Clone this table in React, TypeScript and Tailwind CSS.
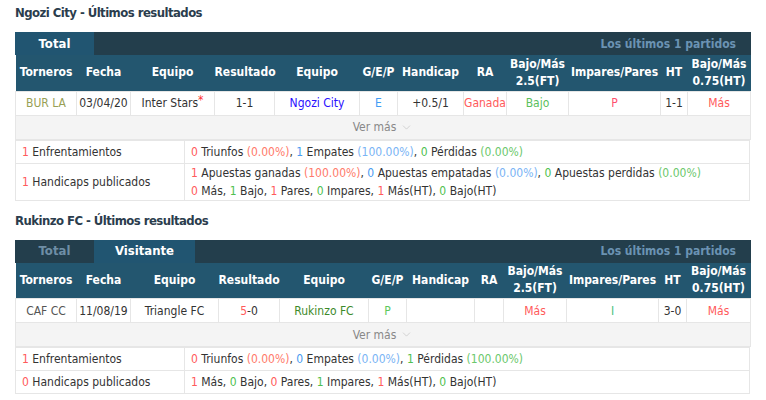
import { ChevronDown } from "lucide-react";

type Cell = { text: React.ReactNode; cls?: string };

const RED = "text-[#ff5b5b]";
const GREEN = "text-[#4fbf4f]";
const BLUE = "text-[#4a9cf0]";

const heads = [
	"Torneros",
	"Fecha",
	"Equipo",
	"Resultado",
	"Equipo",
	"G/E/P",
	"Handicap",
	"RA",
	"Bajo/Más 2.5(FT)",
	"Impares/Pares",
	"HT",
	"Bajo/Más 0.75(HT)",
];

function Section({
	title,
	tabs,
	active,
	widths,
	row,
	stats,
}: {
	title: string;
	tabs: { label: string; w: string }[];
	active: number;
	widths: number[];
	row: Cell[];
	stats: { left: React.ReactNode; right: React.ReactNode }[];
}) {
	return (
		<section className="px-[15px]">
			<h2 className="h-[32px] pt-[3px] text-[13px] font-bold leading-[20px] tracking-[-0.55px] text-[#2b3d4d]">
				{title}
			</h2>
			<div className="flex h-[23px] items-stretch bg-[#233e4c]">
				{tabs.map((t, i) => (
					<div
						key={t.label}
						className={`${t.w} flex items-center justify-center text-[13px] font-bold ${
							i === active ? "bg-[#215571] text-white" : "text-[#6e8ea6]"
						}`}
					>
						{t.label}
					</div>
				))}
				<div className="ml-auto flex items-center pr-[15px] text-[12px] font-bold text-[#6b93b3]">
					Los últimos 1 partidos
				</div>
			</div>
			<table className="w-[735px] table-fixed border-collapse text-center text-[12px]">
				<colgroup>
					{widths.map((w, i) => (
						<col key={i} style={{ width: w }} />
					))}
				</colgroup>
				<thead>
					<tr className="h-[36px] bg-[#23566f] text-white">
						{heads.map((h, i) => (
							<th key={i} className="px-0 font-bold leading-[17px]">
								{h}
							</th>
						))}
					</tr>
				</thead>
				<tbody>
					<tr className="h-[24px] text-[#333]">
						{row.map((c, i) => (
							<td key={i} className={`border border-[#e6e6e6] px-0 whitespace-nowrap ${c.cls ?? ""}`}>
								{c.text}
							</td>
						))}
					</tr>
					<tr className="h-[24px] bg-[#f4f4f4]">
						<td colSpan={12} className="border border-[#e6e6e6] text-[#888]">
							<span className="inline-flex items-center gap-[4px]">
								Ver más
								<ChevronDown size={13} strokeWidth={1} className="text-[#b5b5b5]" />
							</span>
						</td>
					</tr>
				</tbody>
			</table>
			<table className="w-[735px] table-fixed border-collapse text-[12px] text-[#333]">
				<colgroup>
					<col style={{ width: 169 }} />
					<col />
				</colgroup>
				<tbody>
					{stats.map((s, i) => (
						<tr key={i} className="h-[23px]">
							<td className="border border-[#e6e6e6] pl-[6px] leading-[18px]">{s.left}</td>
							<td className="border border-[#e6e6e6] py-0 pl-[6px] leading-[18px]">{s.right}</td>
						</tr>
					))}
				</tbody>
			</table>
		</section>
	);
}

const R = ({ children }: { children: React.ReactNode }) => <span className={RED}>{children}</span>;
const G = ({ children }: { children: React.ReactNode }) => <span className={GREEN}>{children}</span>;
const B = ({ children }: { children: React.ReactNode }) => <span className={BLUE}>{children}</span>;
const Rp = ({ children }: { children: React.ReactNode }) => <span className="text-[#ff7a6a]">{children}</span>;
const Bp = ({ children }: { children: React.ReactNode }) => <span className="text-[#7ab4f5]">{children}</span>;
const Gp = ({ children }: { children: React.ReactNode }) => <span className="text-[#6cc86c]">{children}</span>;

export default function App() {
	return (
		<div className="min-h-[400px] w-[766px] bg-white font-['DejaVu_Sans_Condensed','DejaVu_Sans',sans-serif]">
			<Section
				title="Ngozi City - Últimos resultados"
				tabs={[{ label: "Total", w: "w-[79px]" }]}
				active={0}
				widths={[61, 54, 84, 60, 85, 38, 66, 43, 62, 92, 27, 63]}
				row={[
					{ text: "BUR LA", cls: "text-[#98a055]" },
					{ text: "03/04/20" },
					{
						text: (
							<>
								Inter Stars<span className="relative -top-[3px] text-[#ff3333]">*</span>
							</>
						),
					},
					{ text: "1-1" },
					{ text: "Ngozi City", cls: "text-[#2a10ff]" },
					{ text: "E", cls: "text-[#3f9cf5]" },
					{ text: "+0.5/1" },
					{ text: "Ganada", cls: "text-[#ff5b5b]" },
					{ text: "Bajo", cls: "text-[#5cbf5c]" },
					{ text: "P", cls: "text-[#ff4f6e]" },
					{ text: "1-1" },
					{ text: "Más", cls: "text-[#ff5b5b]" },
				]}
				stats={[
					{
						left: (
							<>
								<R>1</R> Enfrentamientos
							</>
						),
						right: (
							<>
								<R>0</R> Triunfos <Rp>(0.00%)</Rp>, <B>1</B> Empates <Bp>(100.00%)</Bp>, <G>0</G> Pérdidas{" "}
								<Gp>(0.00%)</Gp>
							</>
						),
					},
					{
						left: (
							<>
								<R>1</R> Handicaps publicados
							</>
						),
						right: (
							<>
								<R>1</R> Apuestas ganadas <Rp>(100.00%)</Rp>, <B>0</B> Apuestas empatadas <Bp>(0.00%)</Bp>,{" "}
								<G>0</G> Apuestas perdidas <Gp>(0.00%)</Gp>
								<br />
								<R>0</R> Más, <G>1</G> Bajo, <R>1</R> Pares, <G>0</G> Impares, <R>1</R> Más(HT), <G>0</G> Bajo(HT)
							</>
						),
					},
				]}
			/>
			<div className="h-[7px]" />
			<Section
				title="Rukinzo FC - Últimos resultados"
				tabs={[
					{ label: "Total", w: "w-[79px]" },
					{ label: "Visitante", w: "w-[101px]" },
				]}
				active={1}
				widths={[61, 54, 88, 61, 89, 38, 68, 29, 63, 92, 28, 64]}
				row={[
					{ text: "CAF CC", cls: "text-[#555]" },
					{ text: "11/08/19" },
					{ text: "Triangle FC" },
					{
						text: (
							<>
								<span className="text-[#ff5b5b]">5</span>-0
							</>
						),
					},
					{ text: "Rukinzo FC", cls: "text-[#3d8a2a]" },
					{ text: "P", cls: "text-[#5cc85c]" },
					{ text: "" },
					{ text: "" },
					{ text: "Más", cls: "text-[#ff5b5b]" },
					{ text: "I", cls: "text-[#3cbf7c]" },
					{ text: "3-0" },
					{ text: "Más", cls: "text-[#ff5b5b]" },
				]}
				stats={[
					{
						left: (
							<>
								<R>1</R> Enfrentamientos
							</>
						),
						right: (
							<>
								<R>0</R> Triunfos <Rp>(0.00%)</Rp>, <B>0</B> Empates <Bp>(0.00%)</Bp>, <G>1</G> Pérdidas{" "}
								<Gp>(100.00%)</Gp>
							</>
						),
					},
					{
						left: (
							<>
								<R>0</R> Handicaps publicados
							</>
						),
						right: (
							<>
								<R>1</R> Más, <G>0</G> Bajo, <R>0</R> Pares, <G>1</G> Impares, <R>1</R> Más(HT), <G>0</G> Bajo(HT)
							</>
						),
					},
				]}
			/>
		</div>
	);
}
